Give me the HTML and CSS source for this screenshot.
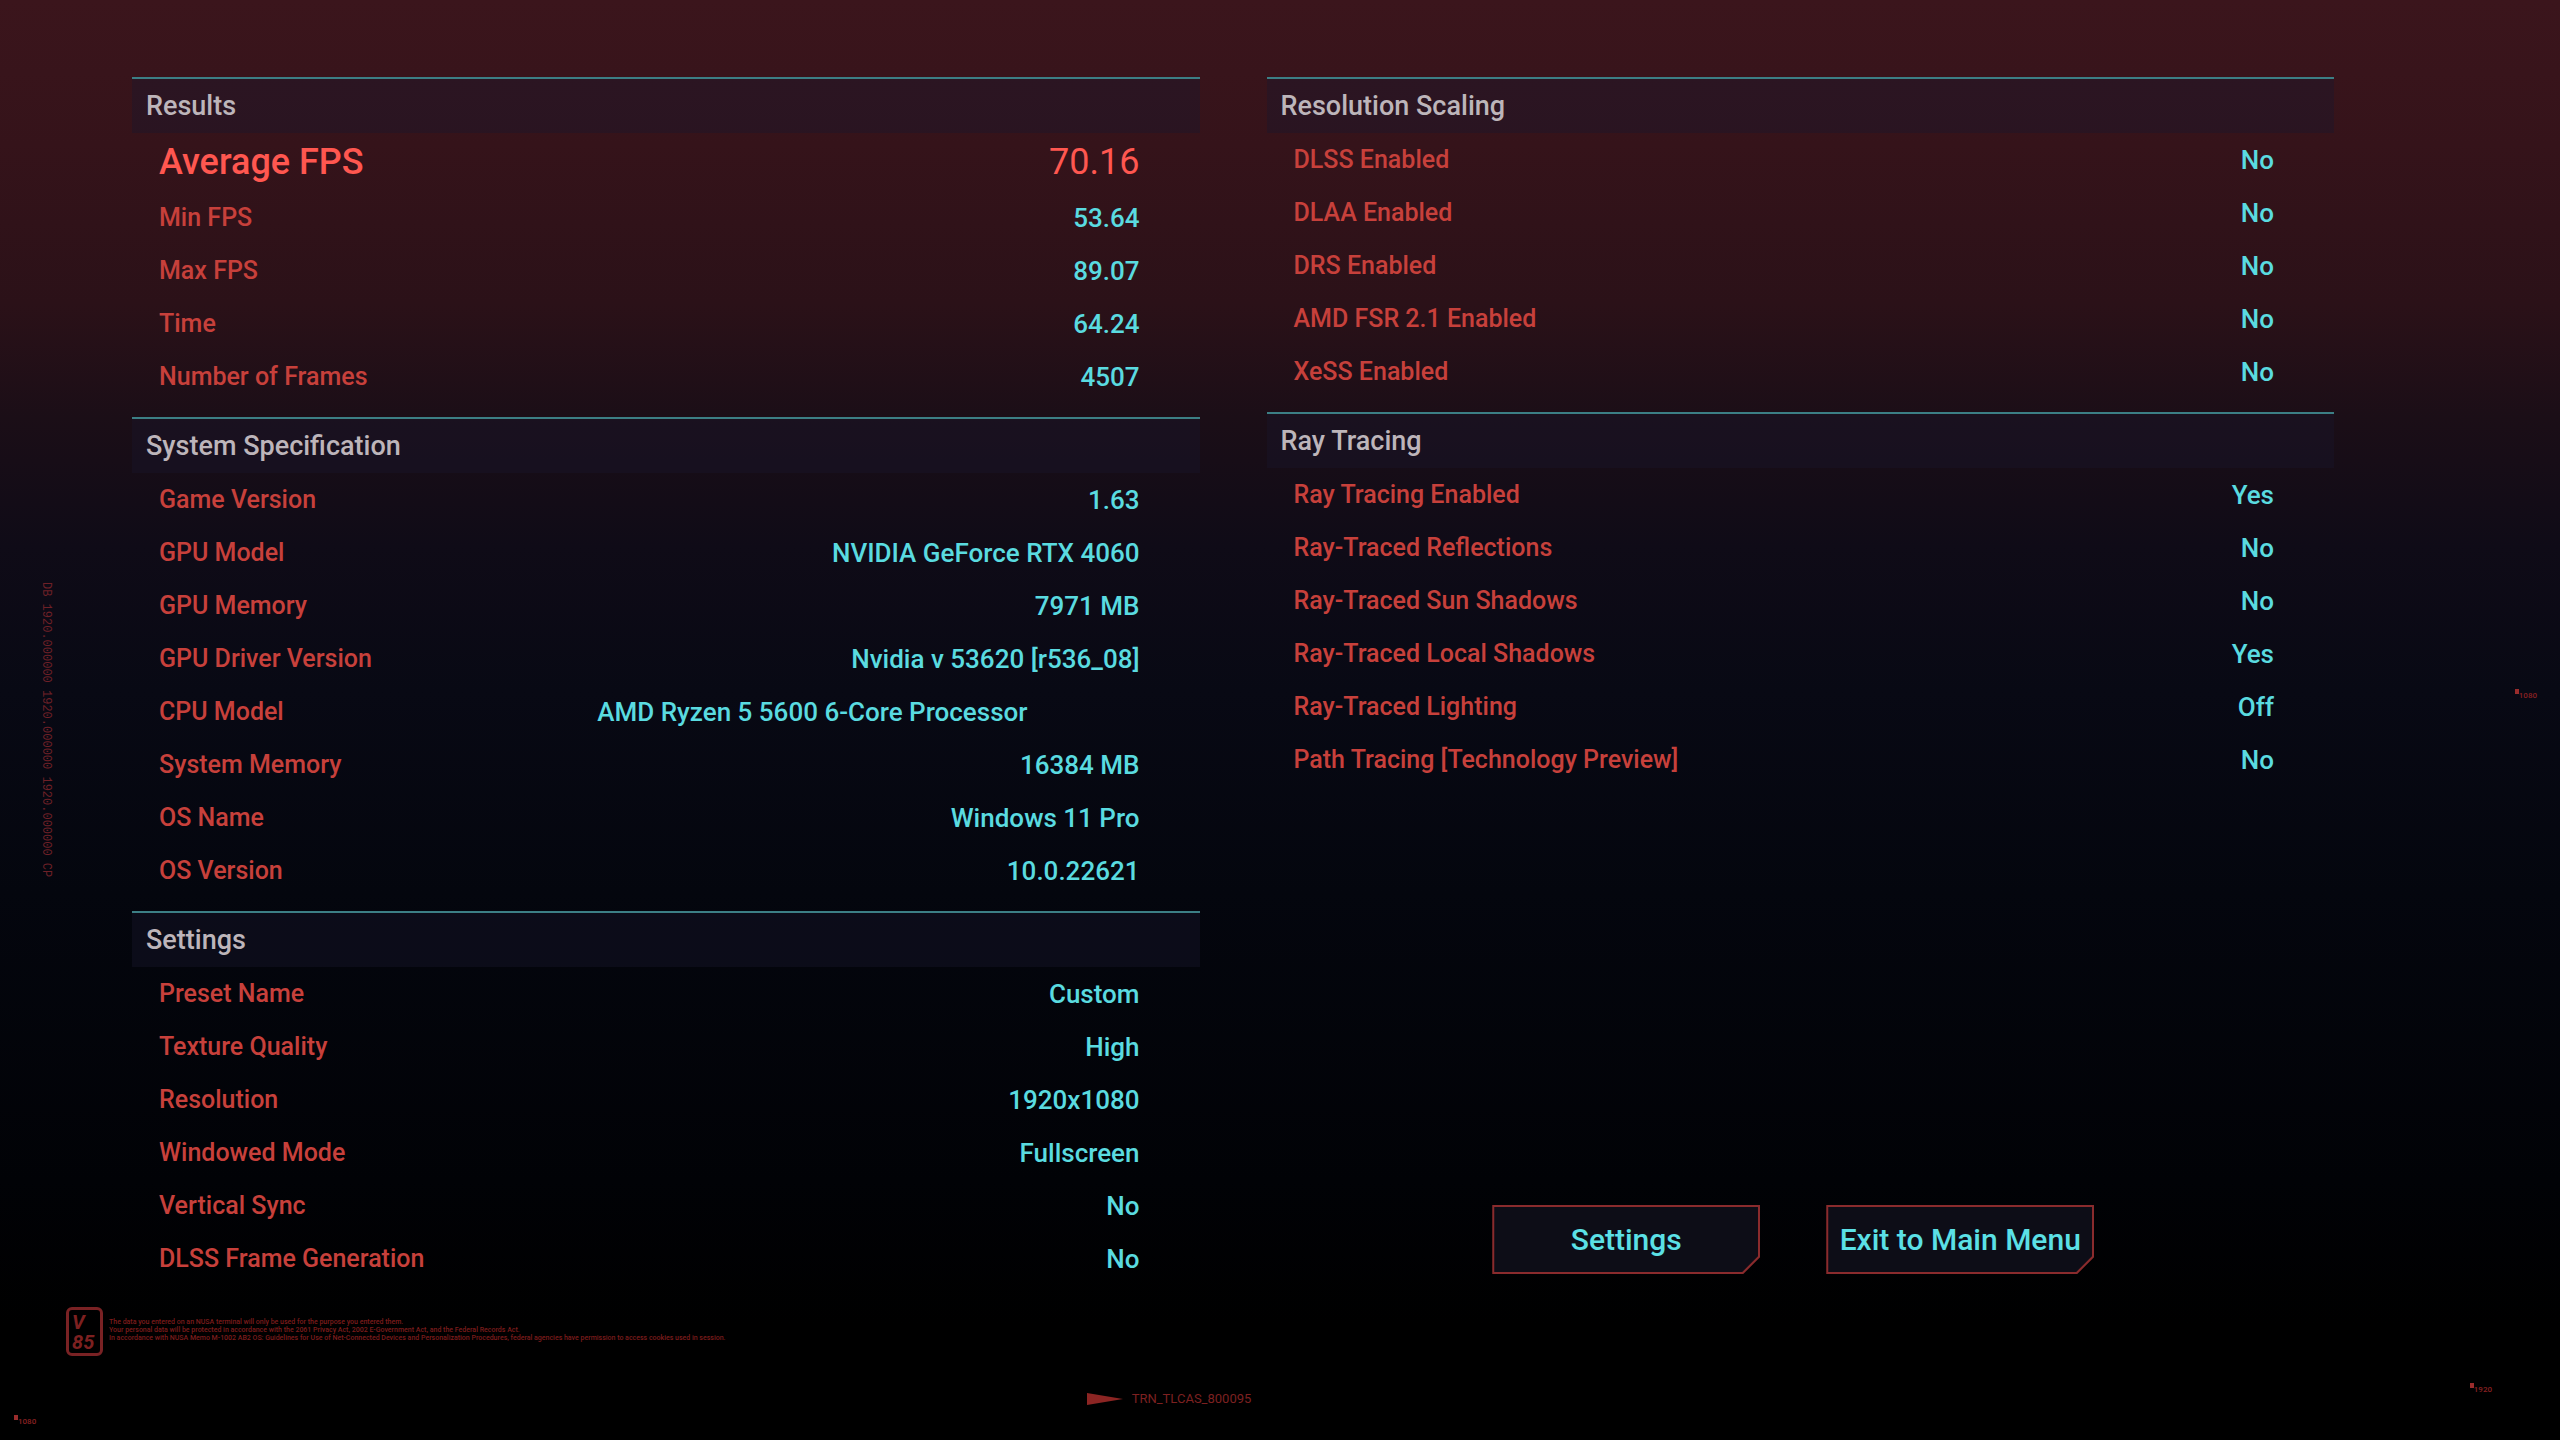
FILE: index.html
```html
<!DOCTYPE html>
<html lang="en">
<head>
    <meta charset="UTF-8">
    <meta name="viewport" content="width=device-width, initial-scale=1.0">
    <title>Benchmark Results</title>
    <link rel="stylesheet" href="styles.css">
</head>
<body>

<main class="results">
    <div class="column">
        <section>
            <h2>Results</h2>
            <table>
                <tr class="average"><th scope="row">Average FPS</th><td>70.16</td></tr>
                <tr><th scope="row">Min FPS</th><td>53.64</td></tr>
                <tr><th scope="row">Max FPS</th><td>89.07</td></tr>
                <tr><th scope="row">Time</th><td>64.24</td></tr>
                <tr><th scope="row">Number of Frames</th><td>4507</td></tr>
            </table>
        </section>
        <section>
            <h2>System Specification</h2>
            <table>
                <tr><th scope="row">Game Version</th><td>1.63</td></tr>
                <tr><th scope="row">GPU Model</th><td>NVIDIA GeForce RTX 4060</td></tr>
                <tr><th scope="row">GPU Memory</th><td>7971 MB</td></tr>
                <tr><th scope="row">GPU Driver Version</th><td>Nvidia v 53620 [r536_08]</td></tr>
                <tr class="cpu"><th scope="row">CPU Model</th><td>AMD Ryzen 5 5600 6-Core Processor</td></tr>
                <tr><th scope="row">System Memory</th><td>16384 MB</td></tr>
                <tr><th scope="row">OS Name</th><td>Windows 11 Pro</td></tr>
                <tr><th scope="row">OS Version</th><td>10.0.22621</td></tr>
            </table>
        </section>
        <section>
            <h2>Settings</h2>
            <table>
                <tr><th scope="row">Preset Name</th><td>Custom</td></tr>
                <tr><th scope="row">Texture Quality</th><td>High</td></tr>
                <tr><th scope="row">Resolution</th><td>1920x1080</td></tr>
                <tr><th scope="row">Windowed Mode</th><td>Fullscreen</td></tr>
                <tr><th scope="row">Vertical Sync</th><td>No</td></tr>
                <tr><th scope="row">DLSS Frame Generation</th><td>No</td></tr>
            </table>
        </section>
    </div>

    <div class="column">
        <section>
            <h2>Resolution Scaling</h2>
            <table>
                <tr><th scope="row">DLSS Enabled</th><td>No</td></tr>
                <tr><th scope="row">DLAA Enabled</th><td>No</td></tr>
                <tr><th scope="row">DRS Enabled</th><td>No</td></tr>
                <tr><th scope="row">AMD FSR 2.1 Enabled</th><td>No</td></tr>
                <tr><th scope="row">XeSS Enabled</th><td>No</td></tr>
            </table>
        </section>
        <section>
            <h2>Ray Tracing</h2>
            <table>
                <tr><th scope="row">Ray Tracing Enabled</th><td>Yes</td></tr>
                <tr><th scope="row">Ray-Traced Reflections</th><td>No</td></tr>
                <tr><th scope="row">Ray-Traced Sun Shadows</th><td>No</td></tr>
                <tr><th scope="row">Ray-Traced Local Shadows</th><td>Yes</td></tr>
                <tr><th scope="row">Ray-Traced Lighting</th><td>Off</td></tr>
                <tr><th scope="row">Path Tracing [Technology Preview]</th><td>No</td></tr>
            </table>
        </section>
        <div class="actions">
            <button type="button">Settings</button>
            <button type="button">Exit to Main Menu</button>
        </div>
    </div>
</main>

<footer>
    <div class="notice">
        <div class="badge">V<br>85</div>
        <p>
            The data you entered on an NUSA terminal will only be used for the purpose you entered them.<br>
            Your personal data will be protected in accordance with the 2061 Privacy Act, 2002 E-Government Act, and the Federal Records Act.<br>
            In accordance with NUSA Memo M-1002 AB2 OS: Guidelines for Use of Net-Connected Devices and Personalization Procedures, federal agencies have permission to access cookies used in session.
        </p>
    </div>
    <div class="serial">
        <svg width="36" height="12" viewBox="0 0 36 12"><path d="M0 0L36 6L0 12Z" fill="#8c2523"/></svg>
        <span>TRN_TLCAS_800095</span>
    </div>
</footer>

<!-- HUD overlay -->
<div class="side-code">DB 1920.000000 1920.000000 1920.000000 CP</div>
<div class="marker marker-right">1080</div>
<div class="marker marker-bottom-right">1920</div>
<div class="marker marker-bottom-left">1080</div>

</body>
</html>
```
FILE: styles.css
```css
* {
    box-sizing: border-box;
}
body {
    position: relative;
    display: flex;
    flex-direction: column;
    min-height: 100vh;
    margin: 0;
    font-family: Roboto, "Liberation Sans", sans-serif;
    font-size: 26px;
    font-weight: 500;
    color: #c7403b;
    background: linear-gradient(#3b151c 0%, #35131a 10%, #2b1118 21%, #1b0e17 29%, #0f0b17 38%, #080914 48%, #04060e 62%, #010206 82%, #000 92%);
}
.results {
    display: grid;
    grid-template-columns: 1fr 1fr;
    gap: 67px;
    padding: 77px 226px 0 132px;
}
.column {
    display: flex;
    flex-direction: column;
}
section {
    padding-bottom: 14px;
}
h2 {
    height: 56px;
    margin: 0;
    padding-left: 14px;
    border-top: 2px solid #3c7f85;
    background: rgba(24, 22, 46, 0.4);
    color: #bdb5ba;
    font-size: 27px;
    font-weight: 500;
    line-height: 54px;
}
table {
    width: 100%;
    border-collapse: collapse;
}
th, td {
    height: 53px;
    padding: 0;
    font-weight: 500;
}
th {
    padding-left: 27px;
    font-size: 25px;
    text-align: left;
}
td {
    padding-right: 60px;
    color: #5adbe0;
    text-align: right;
}
.average th, .average td {
    height: 58px;
    color: #ff5750;
    font-size: 36px;
}
.average td {
    font-weight: 400;
}
.cpu td {
    padding-right: 172px;
}
.actions {
    display: flex;
    justify-content: center;
    gap: 66px;
    margin-top: auto;
    padding: 0 14px 25px 0;
}
button {
    position: relative;
    width: 268px;
    height: 69px;
    padding: 0;
    border: 0;
    background: #8a2b2d;
    clip-path: polygon(0 0, 100% 0, 100% calc(100% - 17px), calc(100% - 17px) 100%, 0 100%);
    color: #5be0e6;
    font: inherit;
    font-size: 30px;
    z-index: 0;
}
button::before {
    content: '';
    position: absolute;
    inset: 2px;
    z-index: -1;
    background: #0d0d17;
    clip-path: polygon(0 0, 100% 0, 100% calc(100% - 16px), calc(100% - 16px) 100%, 0 100%);
}
footer {
    display: flex;
    flex-direction: column;
    gap: 36px;
    padding: 8px 66px 0;
    color: #7d2020;
}
.notice {
    display: flex;
    align-items: center;
    gap: 6px;
}
.badge {
    width: 37px;
    height: 49px;
    padding: 2px 3px;
    border: 3px solid #7a2224;
    border-radius: 6px;
    font-size: 20px;
    font-style: italic;
    font-weight: 700;
    line-height: 20px;
}
.notice p {
    margin: 0;
    padding-bottom: 3px;
    color: #7c1c1c;
    font-size: 7px;
    line-height: 8px;
}
.serial {
    display: flex;
    align-items: center;
    justify-content: center;
    gap: 9px;
    padding-right: 222px;
    font-size: 13px;
    font-weight: 400;
    line-height: 14px;
}
.side-code {
    position: absolute;
    top: 582px;
    left: 39px;
    writing-mode: vertical-rl;
    font-family: "Liberation Mono", monospace;
    font-size: 12px;
    line-height: 13px;
    color: #6e2027;
}
.marker {
    position: absolute;
    padding: 3px 0 0 4px;
    color: #8a2022;
    font-size: 8px;
    line-height: 8px;
}
.marker::before {
    content: '';
    position: absolute;
    top: 0;
    left: 0;
    width: 4px;
    height: 5px;
    background: #9a2c2c;
}
.marker-right {
    top: 689px;
    right: 23px;
}
.marker-bottom-right {
    right: 68px;
    bottom: 46px;
}
.marker-bottom-left {
    bottom: 14px;
    left: 14px;
}
```
